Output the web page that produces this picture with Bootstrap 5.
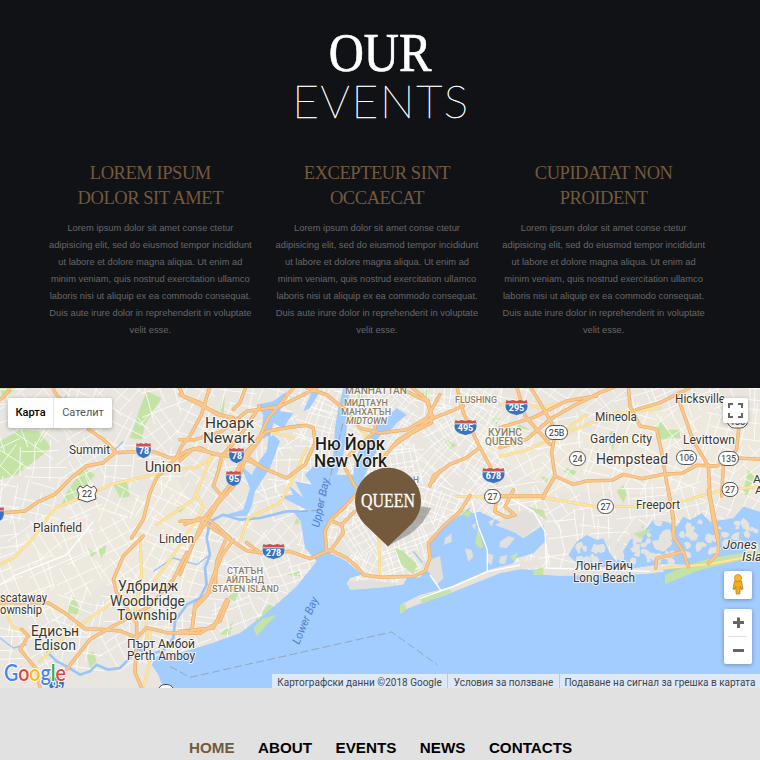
<!DOCTYPE html>
<html lang="bg">
<head>
<meta charset="utf-8">
<meta name="viewport" content="width=device-width, initial-scale=1">
<title>Our Events</title>
<link href="https://cdn.jsdelivr.net/npm/bootstrap@5.3.0/dist/css/bootstrap.min.css" rel="stylesheet">
<style>
body{background:#e1e1e1;font-family:"Liberation Sans",Arial,sans-serif;overflow-x:hidden}
.events{background:#111216;height:388px;padding-top:28px}
.title-a{font:400 54px/50px "Liberation Serif",serif;transform:scaleX(.9);-webkit-text-stroke:.7px #fff}
.title-b{font:100 46px/45px Lato,sans-serif;letter-spacing:1.7px;padding-left:2px;-webkit-text-stroke:.5px #fff}
.event-cols{width:680px;margin:38px 0 0 37px}
.event-cols h3{font:400 18.5px/25px "Liberation Serif",serif;letter-spacing:-.45px;color:#735a3d}
.event-cols p{font-size:9.33px;line-height:17px;color:#66676a;padding-top:9px;white-space:nowrap}
.map-box{height:300px;background:#a3ccff;font-family:Roboto,sans-serif}
.ctl{background:#fff;border-radius:2px;box-shadow:0 1px 4px rgba(0,0,0,.3)}
.map-type{left:8px;top:10px;height:30px;font-size:11px;color:#565656}
.map-type div{line-height:30px;text-align:center}
.map-type .on{width:46px;font-weight:500;color:#000;border-right:1px solid #e5e5e5}
.map-type .off{width:58px}
.full{right:12px;top:10px;width:25px;height:25px}
.man{right:8px;top:183px;width:28px;height:28px}
.zoomer{right:8px;top:221px;width:28px;height:55px}
.terms{right:0;bottom:0;height:14px;font-size:10px;line-height:17px;color:#444;background:rgba(236,240,246,.8);white-space:nowrap}
.terms span{display:block;height:14px;text-align:center}
.terms span+span{border-left:1px solid #a3ccff}
.t1{width:175px}.t2{width:112px}.t3{width:201px}
.foot-nav{padding-top:51px;height:72px;gap:23.500px;padding-left:189px}
.foot-nav a{font-size:15.200px;line-height:18px;font-weight:700;color:#000;text-decoration:none;white-space:nowrap}
.foot-nav .cur{color:#735a3d}
.lbl text{fill:#3b3833;stroke:#fff;stroke-width:2.2px;stroke-opacity:.75;paint-order:stroke;stroke-linejoin:round}
.lbl .area{fill:#8b8067}
.lbl .sea{fill:#4f82cc;stroke:none;font-style:italic}
.lbl .big{fill:#201e1b;font-weight:500}
.num text{font-size:9px;text-anchor:middle}
.glogo{font:600 22px Lato,sans-serif;paint-order:stroke;stroke:#fff;stroke-width:2px}
</style>
<script src="https://cdn.jsdelivr.net/npm/bootstrap@5.3.0/dist/js/bootstrap.bundle.min.js"></script>
</head>
<body>
<section class="events text-center text-white">
  <div class="title-a">OUR</div>
  <div class="title-b">EVENTS</div>
  <div class="row g-0 event-cols">
    <div class="col-4"><h3 class="m-0">LOREM IPSUM<br>DOLOR SIT AMET</h3>
      <p class="m-0">Lorem ipsum dolor sit amet conse ctetur<br>adipisicing elit, sed do eiusmod tempor incididunt<br>ut labore et dolore magna aliqua. Ut enim ad<br>minim veniam, quis nostrud exercitation ullamco<br>laboris nisi ut aliquip ex ea commodo consequat.<br>Duis aute irure dolor in reprehenderit in voluptate<br>velit esse.</p></div>
    <div class="col-4"><h3 class="m-0">EXCEPTEUR SINT<br>OCCAECAT</h3>
      <p class="m-0">Lorem ipsum dolor sit amet conse ctetur<br>adipisicing elit, sed do eiusmod tempor incididunt<br>ut labore et dolore magna aliqua. Ut enim ad<br>minim veniam, quis nostrud exercitation ullamco<br>laboris nisi ut aliquip ex ea commodo consequat.<br>Duis aute irure dolor in reprehenderit in voluptate<br>velit esse.</p></div>
    <div class="col-4"><h3 class="m-0">CUPIDATAT NON<br>PROIDENT</h3>
      <p class="m-0">Lorem ipsum dolor sit amet conse ctetur<br>adipisicing elit, sed do eiusmod tempor incididunt<br>ut labore et dolore magna aliqua. Ut enim ad<br>minim veniam, quis nostrud exercitation ullamco<br>laboris nisi ut aliquip ex ea commodo consequat.<br>Duis aute irure dolor in reprehenderit in voluptate<br>velit esse.</p></div>
  </div>
</section>

<section class="map-box position-relative overflow-hidden">
<svg class="d-block" width="760" height="300" viewBox="0 0 760 300">
<defs>
  <symbol id="int" viewBox="0 0 20 18" preserveAspectRatio="none"><path d="M2 1 4 2 7 1 10 2 13 1 16 2 18 1 19 5H1z" fill="#c9524e"/><path d="M1 5.2H19Q20 12 15 15.500L10 17.500 5 15.500Q0 12 1 5.200z" fill="#3a72bd" stroke="#fff" stroke-width=".6"/></symbol>
  <g id="orange">
    <g transform="translate(0 -6)">
      <path d="M0 381 75 375 115 347 165 325 215 275 260 240 310 230 345 200 380 198 460 197 500 212 525 218 560 195 600 185 640 205 690 210 740 212 780 240"/>
      <path d="M158 0Q165 30 185 40M265 130 310 160 345 196M535 0 550 30 600 50 650 85 700 95M630 0 605 85 570 150 545 180 527 218 470 275 450 320 430 400 395 456M780 60 720 150 665 210 655 255 640 300 665 330M738 0 720 50 700 70M780 160 735 220 715 285 655 350 610 420 590 456M555 415 600 397 625 400 650 420 690 456M0 40Q25 25 30 0"/>
    </g>
    <g transform="translate(540)">
      <path d="M0 155 45 155 125 130 200 70 300 55 410 0M0 20 60 50 120 80 180 100M0 218 40 182 120 200 190 210 260 245 320 270 375 230 405 165 400 120 380 112 330 118 260 130 200 190 150 290 70 395 0 560M340 0 265 90 240 145 190 210M0 400 60 397 120 435 200 488 250 495 330 490 390 512 450 485 500 510 530 535 550 560 600 568 700 565 735 550 750 510 745 465 790 415 840 370 870 323M440 490 435 430 450 398 485 410 490 435 450 490M450 398 500 350 555 290M485 410 525 370M490 230 525 295 560 330M500 210 530 180 580 135 590 100M380 0 440 20 500 70 540 120 600 135 680 125 740 90 780 20M660 0 740 40 760 90 705 125 650 160 610 210M135 460 110 520 105 600 45 650 35 735M0 730 100 720 140 635M780 250 750 290"/>
    </g>
    <g transform="translate(750 -6)"><path d="M480 0 535 45 545 110 480 145 430 180M620 0 640 80 690 185 720 240 740 290M540 300 550 270 600 235 650 215 690 185M640 60 580 85 500 115"/></g>
    <g transform="translate(1500 -6)">
      <path d="M50 0 75 90 150 175M90 0 155 110 165 145M0 185 80 160 150 100 220 60 300 20 350 0M0 125 100 95 200 45 290 30M165 145 155 200 165 270 220 295 260 285 335 283 370 265 425 278 490 265 545 262 590 238 650 240 700 215 780 220M165 270 130 330 0 330M385 0 390 60 420 120 470 130 485 200 500 290 520 390 522 456M410 70 480 50 530 25 570 5M530 25 550 80 580 165 625 240 630 330 645 400 655 456M720 90 710 190 670 240 665 330"/>
    </g>
    <g transform="translate(1200 306)"><path d="M290 20 285 65 320 82 345 75 315 50 340 0M440 0 430 25M805 0 820 90 820 140 850 185 865 230M850 185 770 205 767 235M925 0 940 90 955 160 955 190 925 220"/></g>
    <g transform="translate(0 444)"><path d="M430 0 370 60 340 130 350 170 410 260 410 310 405 410 425 456M560 50 520 130 450 210 340 270 270 310 200 400M0 200 145 200 200 235 255 278 300 280 360 285 410 305 440 275 500 290 600 292 660 255 685 195M700 12 665 60 640 120 620 180 585 215 575 290M740 20 780 50M65 280 85 300 60 340 110 400 120 456"/></g>
  </g>
  <g id="yellow">
    <path d="M250 330 330 290 450 263 530 245 590 238 640 205M470 410 525 372 580 335 635 205M590 320 610 360 560 440 500 530 440 610 440 760M100 450 165 360 225 335 250 330M100 450 40 510 0 530M420 440 425 560 400 700M0 630 40 720 65 725M120 820 200 740 340 640 470 640M720 460 745 390 840 345 880 270 920 180M700 130 660 240M810 130 880 150M1085 130 1160 200"/>
    <path d="M1135 420 1140 560M1500 205 1570 190 1660 150 1760 80M1370 325 1640 330 1780 355 1910 355 2010 350 2150 310 2280 295M1500 50 1560 40 1620 60 1700 40M1660 150 1850 75 1980 60M450 730 450 820 430 900M1990 541 2130 528 2280 500"/>
  </g>
</defs>
<rect width="760" height="300" fill="#e9e5df"/>
<g transform="scale(.33333)">
  <g fill="#eee9df">
    <path d="M0 500 160 360 400 340 520 250 640 460 560 620 300 590 200 700 0 640z"/>
    <path d="M1300 100 1700 150 2100 30 2280 70 2280 330 1660 310z"/>
  </g>
  <g fill="#c5e3a6">
    <path d="M0 160 60 125 115 130 155 180 50 260 0 275zM185 355 195 320 250 240 285 260 225 330zM390 150 420 60 440 10 485 30 435 110 425 155zM180 40 200 20 220 50zM660 60 675 20 670 90zM340 290 380 280 390 325 360 330zM530 355 555 360 540 375zM295 480 318 472 315 502 300 510zM200 660 225 625 240 670 235 680 205 675zM260 800 280 790 290 820 270 840zM265 480 290 495 270 510zM0 0 50 0 10 35z"/>
    <path d="M685 630 710 570 725 590 705 640zM620 595 655 575 655 600zM770 690 810 645 835 670 790 690 760 720zM660 740 700 700 690 740zM860 560 900 545 900 565zM880 410 890 390 900 405zM1070 20 1090 0 1080 60zM1260 20 1290 0 1280 35zM1475 90 1500 90 1490 110zM1500 130 1560 110 1590 125zM1970 110 1980 95 2000 125 2040 125 2040 150 1970 155zM1700 240 1730 250 1720 265 1690 250zM1870 290 1880 320 1870 345 1850 310zM2230 310 2245 240 2265 270 2240 330zM1830 130 1845 130 1840 190 1825 160zM1620 265 1645 270 1640 285zM1330 150 1370 170 1350 185zM1910 430 1930 410 1935 440zM1200 490 1250 525 1265 560 1240 545zM1370 360 1420 370 1410 390z"/>
  </g>
  <g id="streets" fill="none" stroke="#fff" stroke-width="3" stroke-opacity=".8"></g>
  <g transform="translate(540)" fill="#a3ccff">
    <path d="M-50 900-65 860-85 830-70 805 20 789 100 764 180 735 240 690 300 640 350 595 410 520 375 480 362 400 340 372 380 365 300 325 340 320 325 290 370 330 345 280 395 290 375 260 400 235 440 235 460 200 465 120 475 60 490 0H512L500 60 500 130 490 200 470 260 520 260 525 215 540 180 580 140 590 110 625 115 595 150 590 190 540 290 510 340 500 360 450 400 435 440 440 490 500 520 545 560 510 570 500 590 550 602 670 590 680 570 720 568 755 516 748 466 790 416 840 381 900 371 960 401 1030 451 1090 411 1100 456 1060 496 1010 511 990 541 1180 556 1450 541 1560 531 1740 506V900z"/>
    <path d="M120 385 190 365 210 300 180 230 215 260 240 215 260 190 265 150 280 140 300 160 270 240 225 310 215 355 200 385z"/>
    <path d="M245 130 250 80 230 50 280 40 320 10 300 70 340 75 310 120 280 105 270 150zM580 100 620 90 650 60 680 80 650 105 620 140z"/>
    <path d="M400 0 420 10 390 60 370 70z"/>
  </g>
  <g transform="translate(540)" fill="none" stroke="#9bc5f8" stroke-linejoin="round">
    <path d="M360 370 320 370 240 390 180 395 130 380 90 400 80 450 90 500 75 540 80 590 60 630 20 650-15 700-20 750-60 800" stroke-width="8"/>
    <path d="M-60 790-95 800-130 780-150 810-180 840-215 845-250 830-270 850-300 860-340 835-370 820-400 790" stroke-width="8"/>
    <path d="M90 500 50 530-20 510-80 550M250 150 290 120 360 110M700 490 740 540 750 505M850 381 870 360M-540 750-500 780-460 770M-170 160-200 190" stroke-width="4"/>
  </g>
  <g transform="translate(1200 306)">
    <path fill="#a3ccff" d="M505 195 530 155 560 135 590 150 610 145 630 190 650 215 690 150 735 120 760 90 800 95 830 110 850 80 870 90 905 70 930 95 1000 85 1030 50 1080 65V200L900 225 790 222 700 235 540 228z"/>
    <g id="marsh" fill="#e5e3dd"></g>
    <path fill="#e2e0dc" d="M60 220 120 198 130 265 110 285 90 250zM285 105 370 60 420 80 410 110 370 140 350 130zM135 145 155 130 155 155 132 165zM195 175 215 180 220 200 205 215zM300 155 325 138 345 145 320 175 298 172zM262 190 280 195 275 225 260 215zM300 200 322 195 315 222 298 220zM265 95 285 85 275 110zM215 105 228 100 225 120zM-160 275-100 270 0 280-30 290-150 300z"/>
    <path fill="#e8e4dd" d="M10 340 60 315 150 290 265 240 360 215 410 210 420 225 300 250 150 310 50 345 0 365zM400 238 540 240 700 236 785 226 792 245 740 252 480 258 410 253z"/>
    <path fill="#c5e3a6" d="M0 345 12 335 20 358 0 372zM60 320 145 295 155 305 65 342zM400 240 430 232 430 255 400 255zM795 255 850 232 930 205 1080 180V195L900 240 795 282zM235 110 250 170 240 175 225 160zM330 200 355 185 345 215zM180 70 215 65 205 82zM700 130 760 115 720 145zM380 50 430 60 440 90z"/>
    <path fill="none" stroke="#fff" stroke-width="4" d="M60 325 160 290 262 245 360 225M90 255 123 302M215 30 235 110 262 180 262 245"/>
  </g>
  <g fill="#c5e3a6"><path d="M760 720 790 690 830 680 800 710 770 745zM1185 480 1210 490 1250 530 1240 560 1205 530z"/></g>
  <g fill="none" stroke="#fff" stroke-width="4"><path d="M1510 320 1600 370 1635 430 1640 540 1950 550M0 590 50 560 200 500 280 400M260 700 330 640 385 570"/></g>
  <g fill="none" stroke-linejoin="round" stroke-linecap="round">
    <use href="#yellow" stroke="#efd28a" stroke-width="8.500"/><use href="#yellow" stroke="#ffe69b" stroke-width="5.500"/>
    <use href="#orange" stroke="#eaae69" stroke-width="10.500"/><use href="#orange" stroke="#fac88d" stroke-width="6.500"/>
  </g>
  <path d="M510 835 570 868 1175 732 1312 830M900 370 960 367 990 270 1030 100" fill="none" stroke="#949caa" stroke-width="2.500" stroke-dasharray="24 10"/>
</g>

<g class="num" transform="translate(0 -388)">
  <g fill="#fff" font-weight="700">
    <use href="#int" x="135" y="442" width="17" height="17"/><text x="144" y="454">78</text>
    <use href="#int" x="228" y="447" width="17" height="17"/><text x="237" y="459">78</text>
    <use href="#int" x="225" y="470" width="17" height="17"/><text x="234" y="482">95</text>
    <use href="#int" x="261" y="543" width="25" height="17"/><text x="273.500" y="555.500">278</text>
    <use href="#int" x="453" y="419" width="25" height="17"/><text x="465.500" y="431">495</text>
    <use href="#int" x="481" y="467" width="25" height="17"/><text x="493.500" y="479">678</text>
    <use href="#int" x="504" y="399" width="25" height="17"/><text x="516.500" y="411">295</text>
    <use href="#int" x="48" y="676" width="17" height="17"/><text x="57" y="688">95</text>
    <use href="#int" x="-12" y="506" width="17" height="17"/>
  </g>
  <g fill="#fff" stroke="#55524e" stroke-width="1">
    <path d="M80 486 83 488 87 485 91 488 94 486 97 490 95 494 96 499 87 502 78 499 79 494 77 490z"/>
    <rect x="545.500" y="425.500" width="22" height="14" rx="7"/><rect x="569.500" y="451.500" width="16" height="14" rx="7"/><rect x="676.500" y="450.500" width="20" height="14" rx="7"/><rect x="718.500" y="451.500" width="20" height="14" rx="7"/><rect x="484.500" y="489.500" width="16" height="14" rx="7"/><rect x="597.500" y="499.500" width="16" height="14" rx="7"/><rect x="722" y="482.500" width="16" height="14" rx="7"/><rect x="727.500" y="414" width="20" height="14" rx="7"/><rect x="158" y="684.500" width="16" height="14" rx="7"/>
  </g>
  <g fill="#333"><text x="87" y="497">22</text><text x="556.500" y="436">25B</text><text x="577.500" y="462">24</text><text x="686.500" y="461">106</text><text x="728.500" y="462">135</text><text x="492.500" y="500">27</text><text x="605.500" y="510">27</text><text x="730" y="493">27</text><text x="737.500" y="424.500">135</text></g>
</g>
<g class="lbl" id="labels" transform="translate(0 -388)"></g>

<g transform="translate(0 -388)">
  <path d="M388 546 419 506 431 508Q424 524 410 534z" fill="#777" fill-opacity=".55"/>
  <path d="M388 546.500 364.500 524A33 33 0 1 1 411.500 524z" fill="#735a3c"/>
  <text x="361" y="507" font-family="Liberation Serif,serif" font-size="19.500" fill="#fff" stroke="#fff" stroke-width=".3" textLength="54" lengthAdjust="spacingAndGlyphs">QUEEN</text>
  <text class="glogo" x="4" y="681" textLength="62" lengthAdjust="spacingAndGlyphs"><tspan fill="#4285f4">G</tspan><tspan fill="#ea4335">o</tspan><tspan fill="#fbbc05">o</tspan><tspan fill="#4285f4">g</tspan><tspan fill="#34a853">l</tspan><tspan fill="#ea4335">e</tspan></text>
</g>
</svg>

<div class="ctl map-type position-absolute d-flex"><div class="on">Карта</div><div class="off">Сателит</div></div>
<div class="ctl full position-absolute"><svg class="d-block" width="25" height="25"><path d="M6 10V6h4M15 6h4v4M19 15v4h-4M10 19H6v-4" fill="none" stroke="#666" stroke-width="2"/></svg></div>
<div class="ctl man position-absolute"><svg class="d-block" width="28" height="28"><path d="M10.500 10h7l1.500 8-2 .5-.8-3-.4 7.500h-3.600l-.4-7.500-.8 3-2-.5z" fill="#f5ad20" stroke="#b77b1e" stroke-width=".8"/><circle cx="14" cy="7" r="3.500" fill="#fbb62b" stroke="#c98b1d" stroke-width=".8"/></svg></div>
<div class="ctl zoomer position-absolute"><svg class="d-block" width="28" height="55"><path d="M9 13.500H20M14.500 8.500v10.500M9 41.500H20" stroke="#666" stroke-width="3"/><path d="M4 27.500H23" stroke="#e0e0e0"/></svg></div>
<div class="terms position-absolute d-flex"><span class="t1">Картографски данни ©2018 Google</span><span class="t2">Условия за ползване</span><span class="t3">Подаване на сигнал за грешка в картата</span></div>
</section>

<nav class="foot-nav d-flex">
  <a class="cur" href="#">HOME</a><a href="#">ABOUT</a><a href="#">EVENTS</a><a href="#">NEWS</a><a href="#">CONTACTS</a>
</nav>

<script>
const NS = 'http://www.w3.org/2000/svg';
// Place names: text, left, baseline, width, size, class, rotation
const names = [
 ['Summit',69,454,41,12.5],['Union',145,472,36,14],['Нюарк',205,428,49,15.5],['Newark',203,443,52,15.5],
 ['Plainfield',33,532,49,12.5],['Linden',159,543,35,12.5],['Удбридж',118,591,60,14.5],['Woodbridge',110,606,75,14.5],
 ['Township',117,620,60,14.5],['Едисън',31,636,48,14.5],['Edison',34,650,42,14.5],['Пърт Амбой',127,648,68,12.5],
 ['Perth Amboy',127,660,68,12.5],['scataway',0,602,47,12.5],['ownship',0,614,42,12.5],
 ['СТАТЪН',227,574,36,9.5,'area'],['АЙЛЪНД',226,583,38,9.5,'area'],['STATEN ISLAND',212,592,67,9.5,'area'],
 ['MANHATTAN',345,394,62,10.5,'area'],['МИДТАУН',344,406,44,9.5,'area'],['МАНХАТЪН',341,415,50,9.5,'area'],
 ['MIDTOWN',346,424,41,9,'area it'],['FLUSHING',455,403,42,9.5,'area'],['КУИНС',488,436,34,10,'area'],['QUEENS',485,445,38,10,'area'],
 ['Н',413,483,6,9,'area'],
 ['Ню Йорк',315,450,70,17.5,'big'],['New York',314,467,73,17.5,'big'],
 ['Hicksville',675,403,50,12.5],['Mineola',595,421,42,12.5],['Garden City',590,443,62,12.5],['Levittown',683,444,52,12.5],
 ['Hempstead',596,464,72,14.5],['Freeport',636,509,44,12.5],['Лонг Бийч',575,570,58,12.5],['Long Beach',573,582,62,12.5],
 ['Jones',723,549,34,13,'it'],['Isla',742,561,20,13,'it'],['A',753,483,8,11.5],['A',755,494,8,11.5],
 ['Upper Bay',319,528,50,11,'sea',-78],['Lower Bay',299,645,50,11.5,'sea',-67]
];
names.forEach(([s,x,y,w,f,c,r]) => {
  const t = document.createElementNS(NS,'text');
  t.textContent = s;
  const at = {x:x,y:y,'font-size':f,textLength:w,lengthAdjust:'spacingAndGlyphs'};
  if (c) at['class'] = c;
  if (c && c.includes('it')) at['font-style'] = 'italic';
  if (c && c.includes('area')) at['font-weight'] = 500;
  if (r) at.transform = `rotate(${r} ${x} ${y})`;
  for (const k in at) t.setAttribute(k, at[k]);
  document.getElementById('labels').append(t);
});
// Minor streets: small tilted grids that vary by neighbourhood
let seed = 11;
const rnd = () => (seed = (seed * 16807) % 2147483647) / 2147483647;
let d = '';
for (let gx = -60; gx < 2280; gx += 120) for (let gy = -40; gy < 760; gy += 110) {
  const a = rnd() * 1.5, dense = gx > 850 && gx < 1500 ? 6 : 3, ca = Math.cos(a), sa = Math.sin(a);
  const cx = gx + 60, cy = gy + 55;
  for (let i = 0; i < dense; i++) for (let k = 0; k < 2; k++) {
    const off = (i - dense / 2 + rnd() * .7) * 120 / dense, l1 = -30 - rnd() * 55, l2 = 30 + rnd() * 55, b = (rnd() - .5) * 22;
    const p = (u, v) => { const X = k ? u : v, Y = k ? v : u; return (cx + X * ca - Y * sa).toFixed(0) + ' ' + (cy + X * sa + Y * ca).toFixed(0); };
    d += 'M' + p(l1, off) + 'L' + p(0, off + b * .4) + ' ' + p(l2, off + b);
  }
}
const st = document.createElementNS(NS,'path'); st.setAttribute('d', d); document.getElementById('streets').append(st);
// Salt-marsh islands along the south shore
let m = '';
for (let i = 0; i < 125; i++) {
  const x = 520 + rnd() * 550, y = 95 + rnd() * 125;
  if (y < 150 && x < 700 || y > 190 && x > 900) continue;
  const n = 7, r0 = 6 + rnd() * 9;
  for (let j = 0; j < n; j++) { const q = j / n * 6.283, r = r0 * (.6 + rnd() * .7); m += (j ? 'L' : 'M') + (x + r * Math.cos(q)).toFixed(0) + ' ' + (y + r * Math.sin(q)).toFixed(0); }
  m += 'z';
}
const mp = document.createElementNS(NS,'path'); mp.setAttribute('d', m); document.getElementById('marsh').append(mp);
</script>
</body>
</html>
